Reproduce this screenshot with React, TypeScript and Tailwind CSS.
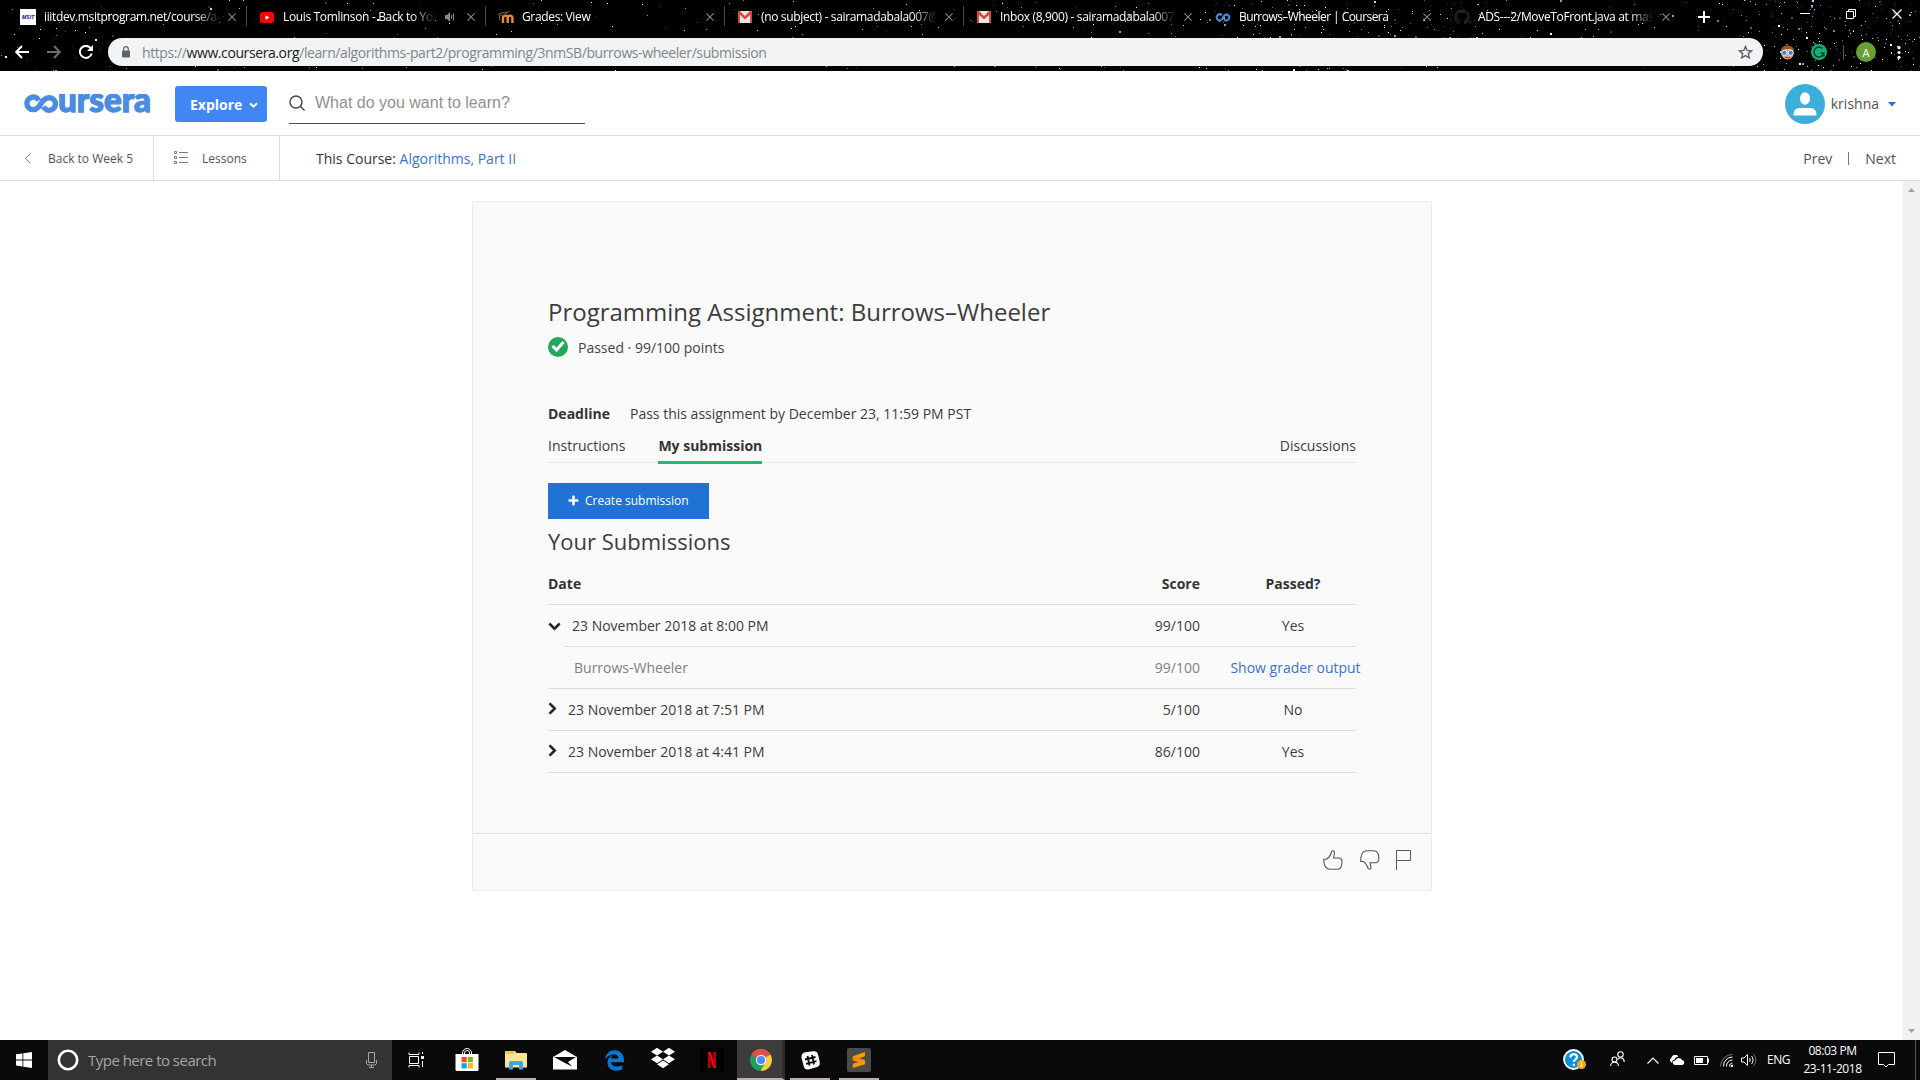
import type { ReactNode } from "react";
import { FaChevronDown, FaChevronRight, FaDropbox, FaEdgeLegacy, FaGithub, FaPlus } from "react-icons/fa";

/* ---------- Browser theme background ---------- */

type Star = { x: number; y: number; c: string; s: number };

function makeStars(): Star[] {
  let seed = 4711;
  const rand = () => {
    seed = (seed * 1103515245 + 12345) % 2147483648;
    return seed / 2147483648;
  };
  const colors = ["#ffffff", "#8da0c8", "#4a5578", "#3a3a48", "#6f7fa8", "#2a2f4c", "#c8d4f0"];
  const bands: [number, number, number][] = [
    [0, 500, 120],
    [500, 900, 70],
    [900, 1200, 90],
    [1200, 1480, 270],
    [1480, 1740, 90],
    [1740, 1920, 230],
  ];
  return bands.flatMap(([a, b, n]) =>
    Array.from({ length: n }, () => ({
      x: Math.floor(a + rand() * (b - a)),
      y: Math.floor(rand() * 71),
      c: colors[Math.floor(rand() * colors.length)],
      s: rand() > 0.9 ? 2 : 1,
    })),
  );
}

const stars = makeStars();

function StarField() {
  return (
    <svg className="absolute inset-0" width="1920" height="71" viewBox="0 0 1920 71">
      {stars.map((s, i) => (
        <rect key={i} x={s.x} y={s.y} width={s.s} height={s.s} fill={s.c} />
      ))}
    </svg>
  );
}

/* ---------- Tab strip ---------- */

const Gmail = () => (
  <svg width="14" height="12" viewBox="0 0 14 12">
    <path d="M0 0h14v12H0z" fill="#e9e7e4" />
    <path d="M0 0h2l5 5 5-5h2v12h-2V4L7 8.500 2 4v8H0z" fill="#d54b3d" />
  </svg>
);

const Youtube = () => (
  <svg width="14" height="11" viewBox="0 0 14 11">
    <rect width="14" height="11" rx="2.500" fill="#f00" />
    <path d="M5.500 3.200v4.600l4-2.300z" fill="#fff" />
  </svg>
);

const Moodle = () => (
  <svg width="16" height="14" viewBox="0 0 16 14" fill="none">
    <path d="M5 13V8a2.300 2.300 0 0 1 4.700 0V13M9.700 13V8a2.300 2.300 0 0 1 4.700 0V13" stroke="#f08a2c" strokeWidth="2.400" />
    <path d="M0 4.500l5-2 5-.5-4 3-4.500.5V10" stroke="#6a5a4c" strokeWidth="1.200" />
  </svg>
);

const Infinity = () => (
  <svg width="16" height="9" viewBox="0 0 16 9" fill="none">
    <path d="M7 2.300A3 3 0 1 0 6.500 6.800C8 5.500 8.500 1.500 11.500 1.500a3 3 0 1 1-2.500 5" stroke="#4a90d9" strokeWidth="2" />
  </svg>
);

const Msit = () => (
  <span className="flex h-4 w-4 flex-col items-center justify-center bg-white text-[5.500px] leading-[6px] font-bold text-[#1c1c9c] italic">
    MSIT
  </span>
);

type Tab = { icon: ReactNode; title: string; sep: boolean; audio?: boolean; tight?: boolean };

const tabs: Tab[] = [
  { icon: <Msit />, title: "iiitdev.msitprogram.net/course/ad", sep: true },
  { icon: <Youtube />, title: "Louis Tomlinson - Back to You", sep: true, audio: true },
  { icon: <Moodle />, title: "Grades: View", sep: true },
  { icon: <Gmail />, title: "(no subject) - sairamadabala007@", sep: true },
  { icon: <Gmail />, title: "Inbox (8,900) - sairamadabala007@", sep: false },
  { icon: <Infinity />, title: "Burrows–Wheeler | Coursera", sep: false, tight: true },
  { icon: <FaGithub size={16} color="#1d1f22" />, title: "ADS---2/MoveToFront.java at mast", sep: false },
];

function Cross({ size, color }: { size: number; color: string }) {
  return (
    <svg width={size} height={size} viewBox="0 0 10 10" stroke={color} strokeWidth="1.300">
      <path d="M.5.5l9 9M9.500.5l-9 9" />
    </svg>
  );
}

function TabStrip() {
  return (
    <div className="flex h-[34px] items-center pl-2">
      {tabs.map((t, i) => (
        <div key={i} className="flex h-[34px] w-[239px] shrink-0 items-center pl-3">
          <span className="flex w-4 shrink-0 items-center justify-center">{t.icon}</span>
          <span
            className={
              "ml-2 shrink-0 overflow-hidden text-[12px] leading-5 whitespace-nowrap text-white [mask-image:linear-gradient(to_right,#000_calc(100%-24px),transparent)] " +
              (t.audio ? "w-[153px] " : "w-[176px] ") +
              (t.tight ? "tracking-[-0.55px]" : "tracking-[-0.35px]")
            }
          >
            {t.title}
          </span>
          {t.audio && (
            <svg className="ml-[9px]" width="11" height="10" viewBox="0 0 11 10" fill="none">
              <path d="M0 3h2l3-3v10L2 7H0z" fill="#8a8a8a" />
              <path d="M6.500 3v4M8.500 1.500v7" stroke="#8a8a8a" />
            </svg>
          )}
          <span className={t.audio ? "ml-[11px] flex" : "ml-[8px] flex"}>
            <Cross size={8} color="#8b8b8b" />
          </span>
          {t.sep && <span className="mt-[-2px] ml-auto h-[20px] w-px bg-[#4a4a4a]" />}
        </div>
      ))}
      <svg className="ml-[17px] shrink-0" width="12" height="12" viewBox="0 0 12 12" stroke="#fff" strokeWidth="2">
        <path d="M6 0v12M0 6h12" />
      </svg>
      <div className="mb-[7px] ml-[90px] flex shrink-0 items-center">
        <span className="h-px w-[10px] bg-white" />
        <svg className="ml-9" width="10" height="10" viewBox="0 0 10 10" fill="none" stroke="#fff">
          <path d="M.5 2.500h7v7h-7zM2.500 2.500v-2h7v7h-2" />
        </svg>
        <span className="ml-9 flex">
          <Cross size={10} color="#fff" />
        </span>
      </div>
    </div>
  );
}

/* ---------- Address bar ---------- */

function Toolbar() {
  return (
    <div className="mt-1 flex h-7 items-center pl-[15px]">
      <svg width="14" height="14" viewBox="0 0 14 14" fill="none" stroke="#fff" strokeWidth="2">
        <path d="M14 7H1.500M7 1L1.200 7 7 13" />
      </svg>
      <svg className="ml-[18px]" width="14" height="14" viewBox="0 0 14 14" fill="none" stroke="#6c6c6c" strokeWidth="2">
        <path d="M0 7h12.500M7 1l5.800 6L7 13" />
      </svg>
      <svg className="ml-[18px]" width="14" height="14" viewBox="0 0 14 14" fill="none">
        <path d="M11.500 3A6 6 0 1 0 12.700 8.500" stroke="#fff" strokeWidth="2" />
        <path d="M14 0v6H8z" fill="#fff" />
      </svg>
      <div className="ml-[15px] flex h-7 w-[1655px] items-center rounded-full bg-[#f1f3f4] pr-[10px] pl-[14px]">
        <svg width="8" height="12" viewBox="0 0 8 12">
          <rect y="4.500" width="8" height="7" rx="1" fill="#5f6368" />
          <path d="M1.700 5V3a2.300 2.300 0 0 1 4.600 0v2" fill="none" stroke="#5f6368" strokeWidth="1.200" />
        </svg>
        <span className="ml-[12px] pt-px text-[14px] leading-5 tracking-[-0.405px] whitespace-nowrap text-[#80868b]">
          https://<span className="text-[#202124]">www.coursera.org</span>
          /learn/algorithms-part2/programming/3nmSB/burrows-wheeler/submission
        </span>
        <svg className="ml-auto" width="15" height="14" viewBox="0 0 15 14" fill="none" stroke="#5f6368" strokeWidth="1.400">
          <path d="M7.500 1.500l1.700 3.900 4.300.4-3.200 2.800 1 4.200-3.800-2.200-3.800 2.200 1-4.200-3.200-2.800 4.300-.4z" />
        </svg>
      </div>
      <svg className="ml-[17px]" width="15" height="15" viewBox="0 0 15 15">
        <circle cx="7.500" cy="8.500" r="6" fill="#e8a274" />
        <path d="M1 7.500C0 2.500 4 .5 7.500.5S15 2.500 14 7.500L11 4H5z" fill="#9c5a14" />
        <circle cx="4.300" cy="7.800" r="2.600" fill="#2b8be6" stroke="#dff0ff" />
        <circle cx="10.700" cy="7.800" r="2.600" fill="#2b8be6" stroke="#dff0ff" />
        <path d="M5 12.500h5" stroke="#a33" />
      </svg>
      <svg className="ml-4" width="16" height="16" viewBox="0 0 16 16" fill="none">
        <circle cx="8" cy="8" r="8" fill="#15b371" />
        <path d="M11.500 4.500A5 5 0 1 0 12.800 9H9.500M12.800 9v3.500" stroke="#063d27" strokeWidth="1.500" />
      </svg>
      <span className="ml-4 h-[15px] w-px bg-[#555]" />
      <span className="ml-3 flex h-5 w-5 items-center justify-center rounded-full bg-[#689f38] text-[11px] leading-none text-white">
        A
      </span>
      <svg className="ml-[21px]" width="4" height="13" viewBox="0 0 4 13" fill="#fff">
        <circle cx="2" cy="1.700" r="1.600" />
        <circle cx="2" cy="6.500" r="1.600" />
        <circle cx="2" cy="11.300" r="1.600" />
      </svg>
    </div>
  );
}

/* ---------- Site header ---------- */

function Logo() {
  return (
    <svg className="mt-[2px]" width="128" height="20" viewBox="0 0 128 20" fill="none">
      <path
        d="M14.800 6.400A6.300 6.300 0 1 0 13.800 13.700C17.500 10.600 18.300 3.700 25.300 3.700A6.300 6.300 0 1 1 19.500 12.700"
        stroke="#4a8ce0"
        strokeWidth="5.400"
      />
      <text
        x="34"
        y="18.300"
        textLength="93"
        lengthAdjust="spacingAndGlyphs"
        fill="#4a8ce0"
        stroke="#4a8ce0"
        strokeWidth="1.300"
        fontFamily="Lato, sans-serif"
        fontWeight="900"
        fontSize="34"
      >
        ursera
      </text>
    </svg>
  );
}

function SiteHeader() {
  return (
    <header className="flex h-[65px] items-center border-b border-[#dcdcdc] pl-6">
      <Logo />
      <button className="mt-[2px] ml-[23px] flex h-9 w-[92px] items-center rounded-[3px] bg-[#4285f4] pl-[15px] text-[14px] font-bold text-white">
        Explore
        <svg className="mt-[2px] ml-[7px]" width="9" height="7" viewBox="0 0 9 7" fill="none" stroke="#fff" strokeWidth="2">
          <path d="M1 1.200l3.500 3.500L8 1.200" />
        </svg>
      </button>
      <div className="mt-[2px] ml-[22px] flex h-[40px] w-[296px] items-center border-b border-[#4d4d4d] pb-px">
        <svg width="16" height="16" viewBox="0 0 16 16" fill="none" stroke="#444" strokeWidth="1.400">
          <circle cx="7" cy="7" r="6" />
          <path d="M11.300 11.300l4.200 4.200" />
        </svg>
        <span className="ml-[10px] font-['Liberation_Sans',sans-serif] text-[16px] leading-5 text-[#909090]">
          What do you want to learn?
        </span>
      </div>
      <div className="mt-[2px] ml-auto flex items-center pr-6">
        <svg width="40" height="40" viewBox="0 0 40 40">
          <circle cx="20" cy="20" r="20" fill="#3baeda" />
          <ellipse cx="20" cy="14.500" rx="5" ry="6.200" fill="#fff" />
          <path d="M8.500 31.500c0-5 2-7.500 6.500-7.500h10c4.500 0 6.500 2.500 6.500 7.500z" fill="#fff" />
        </svg>
        <span className="mb-px ml-[6px] text-[14px] text-[#525252]">krishna</span>
        <svg className="ml-[9px]" width="8" height="5" viewBox="0 0 8 5" fill="#2073d5">
          <path d="M0 0h8L4 4.500z" />
        </svg>
      </div>
    </header>
  );
}

function CourseNav() {
  return (
    <nav className="flex h-[45px] items-center border-b border-[#dcdcdc] text-[#525252]">
      <div className="flex h-full w-[154px] items-center border-r border-[#dcdcdc] pl-[25px] text-[12px]">
        <svg width="6" height="11" viewBox="0 0 6 11" fill="none" stroke="#7a7a7a">
          <path d="M5.500.5l-5 5 5 5" />
        </svg>
        <span className="mt-[2px] ml-[17px] whitespace-nowrap">Back to Week 5</span>
      </div>
      <div className="flex h-full w-[126px] items-center border-r border-[#dcdcdc] pl-5 text-[12px]">
        <svg className="-mt-px" width="14" height="13" viewBox="0 0 14 13" fill="none" stroke="#7a7a7a">
          <path d="M5 1.500h9M5 6.500h9M5 11.500h9M.5.5h2v2h-2zM.5 5.500h2v2h-2zM.5 10.500h2v2h-2z" />
        </svg>
        <span className="mt-[2px] ml-[14px]">Lessons</span>
      </div>
      <span className="ml-[36px] text-[14px] text-[#333]">
        This Course: <span className="text-[#3d72c9]">Algorithms, Part II</span>
      </span>
      <div className="ml-auto flex items-center pr-6 text-[14px]">
        <span>Prev</span>
        <span className="mx-[16px] h-[13px] w-px bg-[#777]" />
        <span>Next</span>
      </div>
    </nav>
  );
}

/* ---------- Assignment card ---------- */

type Row = { date: string; score: string; passed: string; kind: "open" | "nested" | "closed" };

const rows: Row[] = [
  { date: "23 November 2018 at 8:00 PM", score: "99/100", passed: "Yes", kind: "open" },
  { date: "Burrows-Wheeler", score: "99/100", passed: "Show grader output", kind: "nested" },
  { date: "23 November 2018 at 7:51 PM", score: "5/100", passed: "No", kind: "closed" },
  { date: "23 November 2018 at 4:41 PM", score: "86/100", passed: "Yes", kind: "closed" },
];

function SubmissionRow({ row }: { row: Row }) {
  const nested = row.kind === "nested";
  return (
    <div className="flex h-[42px]">
      {row.kind === "open" && (
        <span className="flex w-4 shrink-0 items-center">
          <FaChevronDown size={13} color="#1f1f1f" stroke="#1f1f1f" strokeWidth={30} />
        </span>
      )}
      <div
        className={
          "flex flex-1 items-center border-b border-[#dcdcdc] " + (nested ? "text-[#808080]" : "text-[#3c3c3c]")
        }
      >
        {row.kind === "closed" && (
          <span className="mb-[3px] w-5">
            <FaChevronRight size={13} color="#1f1f1f" stroke="#1f1f1f" strokeWidth={30} className="-ml-[2px]" />
          </span>
        )}
        <span className={row.kind === "open" ? "ml-2" : nested ? "ml-[26px]" : ""}>{row.date}</span>
        <span className="ml-auto">{row.score}</span>
        <span className={"ml-[30px] flex w-[126px] justify-center whitespace-nowrap " + (nested ? "text-[#3d72c9]" : "")}>
          {nested ? <span className="ml-[5px]">{row.passed}</span> : row.passed}
        </span>
      </div>
    </div>
  );
}

function FeedbackIcons() {
  return (
    <div className="mt-[16px] flex h-5 justify-end pr-[19px]">
      <svg width="20" height="20" viewBox="0 0 20 20" fill="none" stroke="#555" strokeWidth="1.100">
        <path d="M.7 9.300h2.800C5 8.500 7.500 5.500 8 3.500 8.200 1.800 9 .6 10.200.7c1.500.2 1.300 2.300 1 3.800L10.600 8h5c2.200 0 3.400 1.200 3.400 3.200 0 4.300-1.500 8-4.500 8H6.500C2.500 19.200.7 14 .7 9.300z" />
      </svg>
      <svg className="ml-[17px]" width="20" height="20" viewBox="0 0 20 20" fill="none" stroke="#555" strokeWidth="1.100">
        <path d="M.7 11.500h2.800C5 12.500 6.500 14.500 7.500 17c.5 1.500 1.200 2.400 2.200 2.300 1.500-.2 1.400-1.800 1-3.300L10 12.700h5.500c2.300 0 3.400-2 3.400-4.500C18.900 3.500 17 .7 13.500.7h-7C2.500.7.7 5.500.7 11.500z" />
      </svg>
      <svg className="ml-[16px]" width="16" height="20" viewBox="0 0 16 20" fill="none" stroke="#555">
        <path d="M.5 20V.5h14v10H.5" />
      </svg>
    </div>
  );
}

function AssignmentCard() {
  return (
    <section className="mt-5 ml-[472px] flex h-[690px] w-[960px] flex-col border border-[#ebebeb] bg-[#fafafa] text-[14px] text-[#3c3c3c]">
      <div className="h-[631px] px-[75px] pt-[94px]">
        <h1 className="h-8 text-[24px] leading-8">Programming Assignment: Burrows–Wheeler</h1>
        <div className="mt-[9px] flex h-5 items-center text-[#444]">
          <svg width="20" height="20" viewBox="0 0 20 20" fill="none">
            <circle cx="10" cy="10" r="10" fill="#21a85a" />
            <path d="M4.500 8.800l4 4.200 7-8" stroke="#fff" strokeWidth="3" />
          </svg>
          <span className="mt-[2px] ml-[10px] leading-5">Passed · 99/100 points</span>
        </div>
        <div className="mt-[46px] flex leading-[21px]">
          <strong className="w-[82px] text-[#333]">Deadline</strong>
          <span>Pass this assignment by December 23, 11:59 PM PST</span>
        </div>
        <div className="flex h-[39px] border-b border-[#e8e8e8] pt-[11px] leading-[21px]">
          <span>Instructions</span>
          <span className="-mb-[3px] ml-[33px] h-[29px] border-b-[3px] border-[#2ab573] font-bold text-[#333]">
            My submission
          </span>
          <span className="ml-auto">Discussions</span>
        </div>
        <button className="mt-5 flex h-9 w-[161px] items-center bg-[#2073d5] pl-5 text-[12px] text-white">
          <FaPlus size={11} stroke="#fff" strokeWidth={25} className="mb-[1px]" />
          <span className="ml-[6px]">Create submission</span>
        </button>
        <h2 className="mt-[7px] h-[30px] text-[22px] leading-[30px]">Your Submissions</h2>
        <div className="mt-[7px]">
          <div className="flex h-[42px] items-center border-b border-[#dcdcdc] font-bold text-[#333]">
            <span>Date</span>
            <span className="ml-auto">Score</span>
            <span className="ml-[30px] w-[126px] text-center">Passed?</span>
          </div>
          {rows.map((r) => (
            <SubmissionRow key={r.date} row={r} />
          ))}
        </div>
      </div>
      <div className="flex-1 border-t border-[#dcdcdc]">
        <FeedbackIcons />
      </div>
    </section>
  );
}

function Scrollbar() {
  return (
    <div className="flex w-[17px] flex-col items-center justify-between bg-[#f1f1f1] py-[7px]">
      <svg width="7" height="4" viewBox="0 0 7 4" fill="#a3a3a3">
        <path d="M0 4h7L3.500 0z" />
      </svg>
      <svg width="7" height="4" viewBox="0 0 7 4" fill="#a3a3a3">
        <path d="M0 0h7L3.500 4z" />
      </svg>
    </div>
  );
}

/* ---------- Taskbar ---------- */

function Slot({ width, line, children }: { width: string; line?: boolean; children: ReactNode }) {
  return (
    <div className={"relative flex h-full shrink-0 items-center justify-center " + width}>
      {children}
      {line && <span className="absolute bottom-0 h-[2px] w-10 bg-[#b5b1b1]" />}
    </div>
  );
}

function TaskbarApps() {
  return (
    <>
      <Slot width="w-[48px]">
        <svg width="17" height="16" viewBox="0 0 17 16" fill="none" stroke="#fff">
          <path d="M1 .5v2h10v-2M1 15.500v-2h10v2M1.500 4.500h9v7h-9zM14.500 0v2M14.500 9v6" />
          <path d="M13 4h3v3h-3z" fill="#fff" stroke="none" />
        </svg>
      </Slot>
      <Slot width="w-[54px]">
        <svg width="24" height="24" viewBox="0 0 24 24">
          <path d="M7.500 6V5a4.500 4.500 0 0 1 9 0v1M9.500 6V5a2.500 2.500 0 0 1 5 0v1" fill="none" stroke="#fff" />
          <path d="M.5 6h23v15.500a1.500 1.500 0 0 1-1.500 1.500H2a1.500 1.500 0 0 1-1.500-1.500z" fill="#fff" />
          <path d="M6.500 9h5.200v5.200H6.500z" fill="#f25022" />
          <path d="M12.700 9h5.200v5.200h-5.200z" fill="#7fba00" />
          <path d="M6.500 15.200h5.200v5.200H6.500z" fill="#00a4ef" />
          <path d="M12.700 15.200h5.200v5.200h-5.200z" fill="#ffb900" />
        </svg>
      </Slot>
      <Slot width="w-[44px]" line>
        <svg width="22" height="19" viewBox="0 0 22 19">
          <path d="M0 1a1 1 0 0 1 1-1h9l1.500 2H21a1 1 0 0 1 1 1v13.500H0z" fill="#ffe694" />
          <path d="M1 .5h8v2H1z" fill="#f5b915" />
          <path d="M4 18.500V12a2 2 0 0 1 2-2h10a2 2 0 0 1 2 2v6.500h-4V14H8v4.500z" fill="#3aa8e6" />
        </svg>
      </Slot>
      <Slot width="w-[54px]">
        <svg width="24" height="20" viewBox="0 0 24 20">
          <path d="M0 7L12 0l12 7v12.500H0z" fill="#fff" />
          <path d="M1 7h22l-8 5 4 4.500-9-4.500z" fill="#0a0a0a" />
        </svg>
      </Slot>
      <Slot width="w-[44px]">
        <FaEdgeLegacy size={21} color="#0078d7" />
      </Slot>
      <Slot width="w-[54px]">
        <FaDropbox size={24} color="#fff" className="-mt-1" />
      </Slot>
      <Slot width="w-[44px]">
        <span className="flex h-6 w-6 items-center justify-center bg-black">
          <svg width="8" height="16" viewBox="0 0 8 16">
            <path d="M0 0h2.700v16H0zM5.300 0H8v16H5.300z" fill="#b1060f" />
            <path d="M0 0h2.700L8 16H5.300z" fill="#e50914" />
          </svg>
        </span>
      </Slot>
      <div className="ml-[3px] flex h-full w-12 shrink-0 items-center justify-center border-r-[3px] border-b-2 border-r-[#2c2c2c] border-b-[#b5b1b1] bg-[#3c3c3c] pt-[2px] pl-[2px]">
        <svg width="22" height="22" viewBox="0 0 22 22">
          <path d="M11 11L1.500 5.500A11 11 0 0 1 20.500 5.500z" fill="#de5246" />
          <path d="M11 11l9.500-5.500A11 11 0 0 1 11 22z" fill="#ffce44" />
          <path d="M6.500 13.500L1.500 5.500A11 11 0 0 0 10.500 22l4.500-8z" fill="#1aa15f" />
          <path d="M11 6h9.700A11 11 0 0 0 1.500 5.500L6 13z" fill="#de5246" />
          <path d="M1.500 5.500L6.500 13.500 9 11z" fill="#1aa15f" />
          <circle cx="11" cy="11" r="5.200" fill="#f1f1f1" />
          <circle cx="11" cy="11" r="4" fill="#4c8bf5" />
        </svg>
      </div>
      <Slot width="w-[50px]" line>
        <svg width="19" height="19" viewBox="0 0 19 19">
          <path d="M4.500 1.300l7.500-1c3-.4 4.500.5 5.200 3.500l1.500 7c.5 3-.5 4.600-3.500 5.500l-7 2c-3 .8-4.900-.3-5.500-3.300l-2-7.500C0 4.200 1 2 4.500 1.300z" fill="#fff" />
          <path d="M6.500 5l2 9.500M11 4l2 9.500M4 8.500L14.500 6M5 12.800l10.500-2.600" stroke="#0a0a0a" strokeWidth="1.800" />
        </svg>
      </Slot>
      <Slot width="w-[48px]" line>
        <span className="flex h-6 w-6 items-center justify-center rounded-[2px] bg-[#4a4a4a]">
          <svg width="14" height="16" viewBox="0 0 14 16" fill="#ff9800">
            <path d="M.8 4.300L13 0v4.200L.8 8.500z" />
            <path d="M.8 4.300L13 8v4.200L.8 8.500z" fill="#f08c00" />
            <path d="M.8 11.800L13 8v4.200L.8 16z" />
          </svg>
        </span>
      </Slot>
    </>
  );
}

function Tray() {
  return (
    <div className="ml-auto flex h-full items-center text-white">
      <svg width="23" height="22" viewBox="0 0 23 22">
        <circle cx="10.500" cy="10.500" r="9.500" fill="#1090d8" stroke="#fff" strokeWidth="1.800" />
        <path d="M7.500 8.500c0-4.500 6.500-4 6.500-.5 0 2.500-3.200 2.500-3.200 5M10.800 14.800v2" fill="none" stroke="#fff" strokeWidth="2.200" />
        <circle cx="18.500" cy="15.500" r="4.500" fill="#f5a81c" />
        <path d="M18.500 12.500v1.300M18.500 14.600v3.500" stroke="#fff" strokeWidth="1.300" />
      </svg>
      <svg className="-mt-[2px] ml-6" width="15" height="16" viewBox="0 0 15 16" fill="none" stroke="#fff" strokeWidth="1.100">
        <circle cx="4.500" cy="8.500" r="2.500" />
        <path d="M.6 15c0-5 7.800-5 7.800 0" />
        <circle cx="10.500" cy="3.500" r="2.700" />
        <path d="M7.500 8.500c2.500-3 6.500-2 6.800 2.500" />
      </svg>
      <svg className="ml-[22px]" width="12" height="7" viewBox="0 0 12 7" fill="none" stroke="#fff" strokeWidth="1.200">
        <path d="M.5 6.500L6 1l5.500 5.500" />
      </svg>
      <svg className="ml-[10px]" width="16" height="10" viewBox="0 0 16 10" fill="#fff">
        <path d="M2.500 7.500A2.500 2.500 0 0 1 2.300 3 4 4 0 0 1 9.500 1.500C7 1.800 6 3 5.700 4.500 4 4.700 3 6 3.500 7.500z" />
        <path d="M6 10a2.300 2.300 0 0 1 .3-4.600 3.600 3.600 0 0 1 6.700-.3A2.500 2.500 0 0 1 13.500 10z" />
      </svg>
      <svg className="ml-[9px]" width="16" height="9" viewBox="0 0 16 9" fill="none" stroke="#fff">
        <path d="M.5.5h13v8H.5zM14.500 2.500v4" />
        <path d="M2 2h7v5H2z" fill="#fff" stroke="none" />
      </svg>
      <svg className="ml-[10px]" width="13" height="13" viewBox="0 0 13 13" fill="none" stroke="#fff">
        <path d="M9.500 12.500a3 3 0 0 1 3-3.500M6.500 12.500a6 6 0 0 1 6-6.500M3.500 12.500a9 9 0 0 1 9-9.500" />
        <path d="M.5 12.500A12 12 0 0 1 12.500.5" stroke="#777" />
        <circle cx="12" cy="12" r="1" fill="#fff" />
      </svg>
      <svg className="ml-[8px]" width="16" height="14" viewBox="0 0 16 14" fill="none" stroke="#fff">
        <path d="M.5 5h2.500l3.500-3.500v11L3 9H.5zM8.500 5c.8 1 .8 3 0 4M10.500 3c2 2.500 2 5.500 0 8" />
        <path d="M12.500 1c3 3.500 3 8.500 0 12" stroke="#777" />
      </svg>
      <span className="mb-[1px] ml-[10px] w-[25px] text-[12px] tracking-[-0.5px]">ENG</span>
      <div className="ml-[11px] flex w-[59px] flex-col items-center text-[12px] leading-[18px] tracking-[-0.45px] whitespace-nowrap">
        <span>08:03 PM</span>
        <span>23-11-2018</span>
      </div>
      <svg className="ml-[16px]" width="17" height="16" viewBox="0 0 17 16" fill="none" stroke="#fff">
        <path d="M.5.5h16v12h-6L8 15l-2.500-2.500h-5z" />
      </svg>
      <span className="ml-[20px] h-full w-px bg-[#555]" />
      <span className="w-1" />
    </div>
  );
}

function Taskbar() {
  return (
    <footer className="flex h-10 items-center bg-[#0a0a0a]">
      <Slot width="w-12">
        <svg width="16" height="16" viewBox="0 0 16 16" fill="#fff">
          <path d="M0 2.300L6.500 1.400v6.100H0zM7.300 1.300L16 0v7.500H7.300zM0 8.400h6.500v6.100L0 13.600zM7.300 8.400H16V16l-8.700-1.300z" />
        </svg>
      </Slot>
      <div className="flex h-full w-[344px] items-center bg-[#333] pr-[15px] pl-[9px]">
        <svg width="22" height="22" viewBox="0 0 22 22" fill="none" stroke="#fff" strokeWidth="2.600">
          <circle cx="11" cy="11" r="9.200" />
        </svg>
        <span className="ml-[9px] text-[15px] leading-5 tracking-[-0.52px] text-[#a6a6a6]">Type here to search</span>
        <svg className="ml-auto" width="11" height="16" viewBox="0 0 11 16" fill="none" stroke="#a6a6a6">
          <path d="M2.500.5h6v10h-6zM.5 8v3.500l1.500 1.500h7l1.500-1.500V8M5.500 13v2.500M3 15.500h5" />
        </svg>
      </div>
      <TaskbarApps />
      <Tray />
    </footer>
  );
}

export default function App() {
  return (
    <div className="flex h-[1080px] w-[1920px] flex-col overflow-hidden bg-white font-['Open_Sans',sans-serif]">
      <div className="relative h-[71px] shrink-0 bg-black">
        <StarField />
        <div className="relative">
          <TabStrip />
          <Toolbar />
        </div>
      </div>
      <SiteHeader />
      <CourseNav />
      <main className="flex min-h-0 flex-1">
        <div className="flex-1">
          <AssignmentCard />
        </div>
        <Scrollbar />
      </main>
      <Taskbar />
    </div>
  );
}
